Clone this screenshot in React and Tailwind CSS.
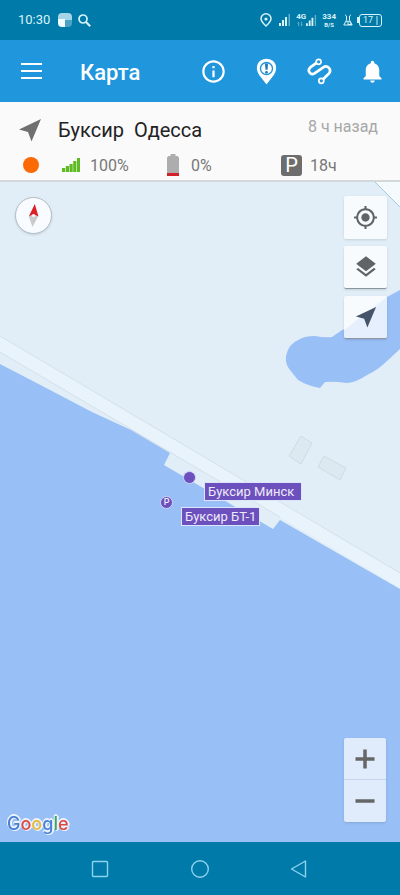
import { MdMyLocation, MdLayers, MdInfoOutline, MdNotifications } from "react-icons/md";

function ArrowIcon({ className }) {
  return (
    <svg viewBox="0 0 24 24" className={className} fill="currentColor" aria-hidden="true">
      <path d="M23 1 L13.5 23.5 L10 14 L1 11.5 Z" />
    </svg>
  );
}

function SignalBars({ className }) {
  return (
    <svg viewBox="0 0 12 12" className={className} fill="currentColor" aria-hidden="true">
      <rect x="0" y="9" width="2" height="3" />
      <rect x="3" y="6" width="2" height="6" />
      <rect x="6" y="3" width="2" height="9" />
      <rect x="9.5" y="0" width="1.5" height="12" opacity="0.45" />
    </svg>
  );
}

function StatusBar() {
  return (
    <div className="flex h-10 items-center bg-[#007aa8] px-[18px] text-[#d9f3fa]">
      <span className="text-[13px]">10:30</span>
      <svg viewBox="0 0 14 14" className="ml-2 size-[14px]" aria-hidden="true">
        <path d="M4 0 H10 Q14 0 14 4 V7 H0 V4 Q0 0 4 0 Z" fill="#a5d5e6" />
        <path d="M0 6 H7 V14 H4 Q0 14 0 10 Z" fill="#f2fdff" />
        <path d="M7 7 H14 V10 Q14 14 10 14 H7 Z" fill="#4ba3c3" />
      </svg>
      <svg viewBox="0 0 13 13" className="ml-[6px] size-[13px]" fill="none" stroke="currentColor" aria-hidden="true">
        <circle cx="5" cy="5" r="4" strokeWidth="1.7" />
        <path d="M8 8 L12.2 12.2" strokeWidth="2" />
      </svg>

      <div className="ml-auto flex items-center">
        <svg viewBox="0 0 12 14" className="h-[14px] w-3" fill="none" stroke="currentColor" aria-hidden="true">
          <path d="M6 13 C3 10.3 1 8.4 1 5.8 A5 5 0 0 1 11 5.8 C11 8.4 9 10.3 6 13 Z" strokeWidth="1.5" />
          <circle cx="6" cy="6" r="1.6" fill="currentColor" stroke="none" />
        </svg>
        <SignalBars className="ml-[7px] size-3" />
        <div className="ml-[5px] flex flex-col">
          <span className="text-[8px] leading-[8px] font-bold">4G</span>
          <svg viewBox="0 0 10 6" className="h-[6px] w-[9px] opacity-50" stroke="currentColor" aria-hidden="true">
            <path d="M3 5.5 V1 L1.5 2.5 M6 0.5 V5 L7.5 3.5" fill="none" />
          </svg>
        </div>
        <SignalBars className="size-[11px]" />
        <div className="ml-[5px] flex flex-col items-center font-bold">
          <span className="text-[8px] leading-[8px]">334</span>
          <span className="text-[6px] leading-[7px]">B/S</span>
        </div>
        <svg viewBox="0 0 10 12" className="ml-[7px] h-3 w-[10px]" fill="none" stroke="currentColor" aria-hidden="true">
          <path d="M2 0.8 L3.5 2 V6 L0.8 11 H9.2 L6.5 6 V2 L8 0.8" />
          <path d="M3 8 L5 7 L7 8 L8.5 10.5 H5 V8" />
        </svg>
        <svg viewBox="0 0 2 12" className="ml-[4px] h-3 w-[2px]" aria-hidden="true">
          <rect x="0" y="3" width="2" height="6" fill="currentColor" />
        </svg>
        <div className="flex h-[13px] w-[23px] items-center justify-center gap-[3px] rounded-[3px] border border-current">
          <span className="text-[9px] leading-[11px]">17</span>
          <span className="h-[9px] w-[2px] bg-[#5fb3cf]" />
        </div>
      </div>
    </div>
  );
}

function AppHeader() {
  return (
    <header className="flex h-[62px] items-center bg-[#2096dc] pr-[14px] pl-[21px] text-white">
      <button type="button" aria-label="Меню" className="flex w-[21px] flex-col gap-[5px]">
        <span className="h-[2px] w-full bg-current" />
        <span className="h-[2px] w-full bg-current" />
        <span className="h-[2px] w-full bg-current" />
      </button>
      <h1 className="mt-[2px] ml-[38px] text-[22px] font-medium">Карта</h1>

      <div className="ml-auto flex items-center gap-[26px]">
        <button type="button" aria-label="Информация">
          <MdInfoOutline className="size-[27px]" />
        </button>
        <button type="button" aria-label="События">
          <svg viewBox="0 0 27 27" className="size-[27px]">
            <path
              d="M13.5 26.5 L6 16.8 C1.5 10 4.2 1 13.5 0.8 C22.8 1 25.5 10 21 16.8 Z"
              fill="currentColor"
            />
            <circle cx="13.5" cy="10.5" r="6" fill="none" stroke="#2096dc" strokeWidth="1.4" />
            <path d="M12 5.5 H15 L14.5 11.8 H12.5 Z" fill="#1679b8" />
            <circle cx="13.5" cy="14.2" r="1.3" fill="#1679b8" />
          </svg>
        </button>
        <button type="button" aria-label="Маршруты">
          <svg viewBox="0 0 27 27" className="size-[27px]" fill="none" stroke="currentColor">
            <path
              d="M10.5 4.8 L4.3 9.4 C0.8 12.6 4.6 17.8 8.5 15.4 L17.3 9.3 C21.5 6.6 26.2 11.6 22.8 15.6 L17.3 21"
              strokeWidth="2.7"
            />
            <circle cx="12.6" cy="3.8" r="2.5" strokeWidth="1.7" />
            <circle cx="15.3" cy="22.8" r="2.5" strokeWidth="1.7" />
          </svg>
        </button>
        <button type="button" aria-label="Уведомления">
          <MdNotifications className="size-[27px]" />
        </button>
      </div>
    </header>
  );
}

function UnitInfo() {
  return (
    <section className="flex h-20 flex-col border-b-2 border-[#d3d8db] bg-[#fafafa]">
      <div className="flex h-[50px] items-center pt-2 pr-[22px] pl-[18px]">
        <ArrowIcon className="size-6 text-[#707070]" />
        <h2 className="ml-4 text-xl whitespace-pre text-[#222]">Буксир  Одесса</h2>
        <span className="mb-[6px] ml-auto text-base text-[#a8a8a8]">8 ч назад</span>
      </div>
      <div className="grid grid-cols-[62px_105px_114px_1fr] items-center text-base leading-[28px] text-[#777]">
        <span className="ml-[23px] size-4 rounded-full bg-[#fb6a04]" />
        <div className="flex items-center gap-[10px]">
          <svg viewBox="0 0 18 14" className="h-[14px] w-[18px]" fill="#5fbb24" aria-hidden="true">
            <rect x="0" y="10" width="3.2" height="4" />
            <rect x="3.8" y="8" width="3.2" height="6" />
            <rect x="7.5" y="6" width="3.2" height="8" />
            <rect x="11.2" y="3" width="3.2" height="11" />
            <rect x="15" y="0" width="3" height="14" />
          </svg>
          <span className="pt-[2px]">100%</span>
        </div>
        <div className="flex items-center gap-3">
          <svg viewBox="0 0 12 22" className="h-[22px] w-3" aria-hidden="true">
            <path d="M3.5 0 H8.5 V2 H10.5 L12 3.5 V19 H0 V3.5 L1.5 2 H3.5 Z" fill="#adadad" />
            <rect x="0" y="19" width="12" height="3" fill="#d3202a" />
          </svg>
          <span className="pt-[2px]">0%</span>
        </div>
        <div className="flex items-center gap-2">
          <span className="flex size-[21px] items-center justify-center rounded-[3px] bg-[#6d6d6d] text-xl leading-5 text-white">
            P
          </span>
          <span className="pt-[2px]">18ч</span>
        </div>
      </div>
    </section>
  );
}

function MapCanvas() {
  return (
    <svg
      viewBox="0 0 400 660"
      preserveAspectRatio="xMidYMid slice"
      className="absolute inset-0 size-full"
      aria-hidden="true"
    >
      <rect width="400" height="660" fill="#e1eef7" />
      {/* corner block */}
      <path d="M375 0 L400 25 V0 Z" fill="#f5fafd" />
      <path d="M375 0 L400 25" stroke="#a3c9df" />
      {/* pond */}
      <path
        d="M400 108 L387 115 L353 141 Q347 147 342 148 L332 155 Q325 156 315 154 Q305 154 300 157 Q288 162 286 174 Q285 182 290 188 L298 198 Q308 204 320 206 L325 200 Q333 199 347 201 Q357 200 367 193 Q378 188 387 179 L400 167 Z"
        fill="#99bff7"
      />
      {/* embankment */}
      <path d="M0 154 L400 391 V406 L0 170 Z" fill="#e8f3fc" />
      <path d="M0 154 L400 391" stroke="#d5e0e8" />
      <path d="M0 170 L280 335" stroke="#d5e0e8" />
      {/* sea */}
      <path
        d="M0 182 L50 208 L92 230 L131 248 L170 271 L164 283 L273 347 L280 338 L400 407 V660 H0 Z"
        fill="#99bff7"
      />
      {/* buildings */}
      <g fill="#dde9f0" stroke="#d0dce4">
        <path d="M301 254 L312 261 L301 282 L289 274 Z" />
        <path d="M324 274 L346 286 L340 298 L318 285 Z" />
      </g>
    </svg>
  );
}

function MapView() {
  return (
    <main className="relative flex-1 overflow-hidden">
      <MapCanvas />

      {/* units */}
      <span className="absolute top-[289px] left-[183px] size-[13px] rounded-full border border-[#cfd6fa] bg-[#6c50bd]" />
      <span className="absolute top-[300px] left-[204px] border border-[#dbe6fb] bg-[#6c50bd] pr-[7px] pl-[3px] text-[13px] leading-[17px] whitespace-nowrap text-[#eeeafa]">
        Буксир Минск
      </span>
      <span className="absolute top-[314px] left-[160px] flex size-[13px] items-center justify-center rounded-full border border-[#cfd6fa] bg-[#6c50bd] text-[9px] font-medium text-[#eeeafa]">
        P
      </span>
      <span className="absolute top-[325px] left-[181px] border border-[#dbe6fb] bg-[#6c50bd] px-[3px] text-[13px] leading-[17px] whitespace-nowrap text-[#eeeafa]">
        Буксир БТ-1
      </span>

      {/* compass */}
      <button
        type="button"
        aria-label="Компас"
        className="absolute top-[15px] left-[15px] size-[37px] rounded-full border border-[#b5bec5] bg-[#f8fbff] shadow-sm"
      >
        <svg viewBox="0 0 35 35" className="size-full">
          <path d="M18.8 6 L22.5 18.5 L17.5 16.5 L12.8 18.5 Z" fill="#da2128" />
          <path d="M12.8 18.5 L17.5 16.5 L22 18.5 L16.5 29 Z" fill="#c9cbcd" />
          <circle cx="17.5" cy="17.5" r="1.5" fill="#f8fbff" />
        </svg>
      </button>

      <div className="absolute top-[14px] right-[13px] flex flex-col gap-[7px] text-[#606367]">
        <button type="button" aria-label="Моё местоположение" className="flex size-[43px] items-center justify-center rounded-xs bg-white/75 shadow-sm">
          <MdMyLocation className="size-[25px]" />
        </button>
        <button type="button" aria-label="Слои" className="flex size-[43px] items-center justify-center rounded-xs border-b border-[#8d969d] bg-white/75 shadow-sm">
          <MdLayers className="size-[26px]" />
        </button>
        <button type="button" aria-label="Навигация" className="flex size-[43px] items-center justify-center rounded-xs border-b border-[#8d969d] bg-white/75 text-[#46546b] shadow-sm">
          <ArrowIcon className="size-[22px]" />
        </button>
      </div>

      <div className="absolute right-[14px] bottom-5 flex w-[42px] flex-col divide-y divide-[#c5d5ec] rounded-xs bg-[#e0ecfc] text-[#666] shadow-sm">
        <button type="button" aria-label="Приблизить" className="flex h-[42px] items-center justify-center">
          <svg viewBox="0 0 20 20" className="size-5" stroke="currentColor" strokeWidth="3.5">
            <path d="M10 0.5 V19.5 M0.5 10 H19.5" />
          </svg>
        </button>
        <button type="button" aria-label="Отдалить" className="flex h-[42px] items-center justify-center">
          <svg viewBox="0 0 20 20" className="size-5" stroke="currentColor" strokeWidth="3.5">
            <path d="M0.5 10 H19.5" />
          </svg>
        </button>
      </div>

      <div className="absolute bottom-[6px] left-[7px] font-[Inter,sans-serif] text-lg leading-6 font-medium [filter:drop-shadow(1px_1px_0_#e9f2fd)_drop-shadow(-1px_-1px_0_#e9f2fd)_drop-shadow(1px_-1px_0_#e9f2fd)]">
        <span className="text-[#4a80d6]">G</span>
        <span className="text-[#dc4a43]">o</span>
        <span className="text-[#e9b93b]">o</span>
        <span className="text-[#4a80d6]">g</span>
        <span className="text-[#3fa35c]">l</span>
        <span className="text-[#dc4a43]">e</span>
      </div>
    </main>
  );
}

function NavigationBar() {
  return (
    <nav className="flex h-[53px] items-center justify-center gap-20 bg-[#007aa8] text-[#8cd3f0]">
      <button type="button" aria-label="Недавние">
        <svg viewBox="0 0 20 20" className="size-5" fill="none" stroke="currentColor" strokeWidth="1.4">
          <rect x="2.5" y="2.5" width="15" height="15" rx="1" />
        </svg>
      </button>
      <button type="button" aria-label="Домой">
        <svg viewBox="0 0 20 20" className="size-5" fill="none" stroke="currentColor" strokeWidth="1.4">
          <circle cx="10" cy="10" r="8.3" />
        </svg>
      </button>
      <button type="button" aria-label="Назад">
        <svg viewBox="0 0 20 20" className="size-5" fill="none" stroke="currentColor" strokeWidth="1.4" strokeLinejoin="round">
          <path d="M15.5 2 V18 L1.5 10 Z" />
        </svg>
      </button>
    </nav>
  );
}

export default function App() {
  return (
    <div className="flex min-h-screen flex-col font-[Roboto,sans-serif]">
      <StatusBar />
      <AppHeader />
      <UnitInfo />
      <MapView />
      <NavigationBar />
    </div>
  );
}
